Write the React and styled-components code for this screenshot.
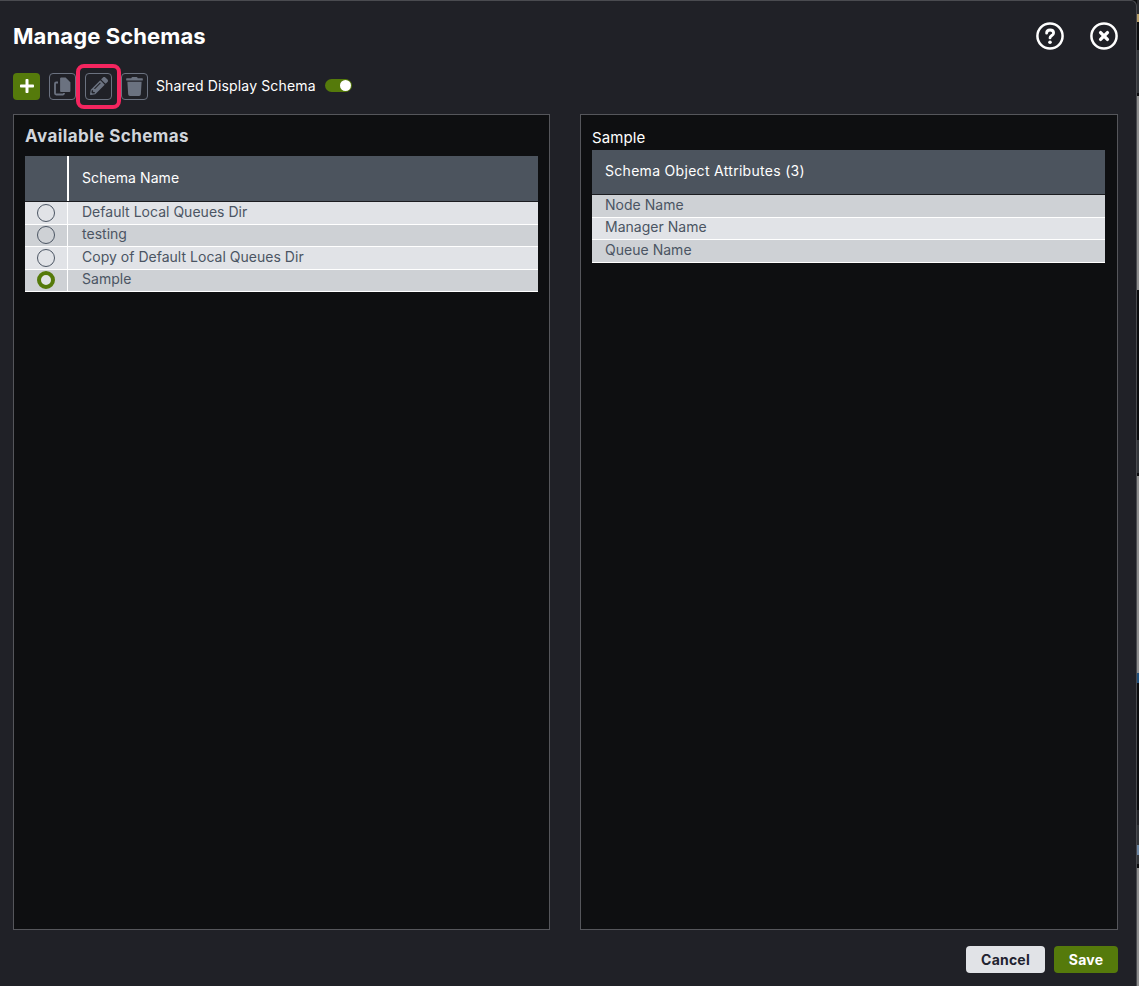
import React from 'react';
import styled, { createGlobalStyle } from 'styled-components';
import { FaPlus, FaPencilAlt, FaTrash } from 'react-icons/fa';

const GlobalStyle = createGlobalStyle`
  html, body {
    margin: 0;
    padding: 0;
    background: #0b0c0e;
    overflow: hidden;
  }
  body {
    font-family: "Inter", "Liberation Sans", sans-serif;
  }
`;

const Page = styled.div`
  display: flex;
  width: 1139px;
  height: 986px;
`;

const Dialog = styled.div`
  width: 1137px;
  height: 986px;
  flex: none;
  box-sizing: border-box;
  background: #202127;
  border-top: 1px solid #4a4b50;
  border-right: 1px solid #4a4b50;
  border-top-right-radius: 6px;
  padding: 0 18px 13px 13px;
  display: flex;
  flex-direction: column;
`;

/* sliver of the page behind the dialog */
const Backdrop = styled.div`
  flex: 1;
  background: linear-gradient(
    to bottom,
    #2a2b2f 0 14px,
    #b9a06a 14px 22px,
    #0b0c0e 22px 50px,
    #33363a 50px 93px,
    #0b0c0e 93px 96px,
    #8f8f8f 96px 290px,
    #0b0c0e 290px 440px,
    #33363a 440px 473px,
    #0b0c0e 473px 476px,
    #8f8f8f 476px 673px,
    #1f4e79 673px 683px,
    #0b0c0e 683px 810px,
    #222327 810px 825px,
    #33363a 825px 845px,
    #6d87a3 845px 855px,
    #33363a 855px 864px,
    #0b0c0e 864px 868px,
    #8f8f8f 868px 986px
  );
`;

const Header = styled.header`
  height: 70px;
  flex: none;
  display: flex;
  align-items: center;
  justify-content: space-between;
`;

const Title = styled.h1`
  margin: 0;
  color: #fff;
  font-size: 22px;
  font-weight: 700;
  letter-spacing: 0.1px;
`;

const HeaderIcons = styled.div`
  display: flex;
  gap: 26px;
  color: #fff;
`;

const Toolbar = styled.div`
  height: 28px;
  flex: none;
  display: flex;
  align-items: center;
  margin-top: 1px;
`;

const AddButton = styled.button`
  width: 27px;
  height: 27px;
  padding: 0;
  border: 0;
  border-radius: 4px;
  background: #557a0b;
  color: #fff;
  display: flex;
  align-items: center;
  justify-content: center;
  margin-right: 9px;
`;

const IconButton = styled.button`
  position: relative;
  width: 27px;
  height: 27px;
  padding: 0;
  border: 1px solid #6b7280;
  border-radius: 4px;
  background: transparent;
  color: #6b7280;
  display: flex;
  align-items: center;
  justify-content: center;
  margin-right: ${(p) => p.$gap}px;
`;

const Highlight = styled.span`
  position: absolute;
  inset: -10px;
  border: 4px solid #f5255f;
  border-radius: 8px;
`;

const ToggleLabel = styled.span`
  color: #fff;
  font-size: 14px;
  margin-left: 8px;
  margin-right: 9px;
  padding-bottom: 2px;
  letter-spacing: 0.14px;
`;

const Toggle = styled.span`
  width: 27px;
  height: 13px;
  margin-bottom: 1px;
  border-radius: 7px;
  background: #557a0b;
  display: flex;
  align-items: center;
  justify-content: flex-end;
  padding-right: 1px;
  box-sizing: border-box;
  &::after {
    content: '';
    width: 11px;
    height: 11px;
    border-radius: 50%;
    background: #fff;
  }
`;

const Panels = styled.div`
  flex: 1;
  display: grid;
  grid-template-columns: 537px 538px;
  gap: 30px;
  margin-top: 14px;
  min-height: 0;
`;

const Panel = styled.section`
  background: #0e0f11;
  border: 1px solid #55565b;
  padding: ${(p) => p.$top}px ${(p) => p.$right}px 0 11px;
`;

const PanelTitle = styled.h2`
  margin: 0 0 9px;
  color: #d1d5db;
  font-size: 17px;
  line-height: 22px;
  font-weight: 700;
  letter-spacing: 0.43px;
`;

const SampleTitle = styled.div`
  color: #fff;
  font-size: 15px;
  line-height: 20px;
  margin-bottom: 2px;
  letter-spacing: 0.1px;
`;

const TableHead = styled.div`
  display: flex;
  height: ${(p) => p.$height}px;
  background: #4c545e;
  border-bottom: 1px solid #1b1c20;
  color: #fff;
  font-size: 14px;
  letter-spacing: ${(p) => p.$track}px;
`;

const RadioHead = styled.div`
  width: 42px;
  flex: none;
  border-right: 2px solid #fff;
`;

const HeadLabel = styled.div`
  display: flex;
  align-items: center;
  padding-bottom: ${(p) => p.$lift}px;
  padding-left: ${(p) => p.$pad}px;
`;

const Row = styled.div`
  display: flex;
  height: 21.5px;
  border-bottom: 1px solid #fff;
  background: ${(p) => (p.$shade ? '#ced1d5' : '#e1e3e7')};
  color: #4b5563;
  font-size: 14px;
  letter-spacing: 0.02px;
`;

const RadioCell = styled.div`
  width: 42px;
  flex: none;
  border-right: 1px solid #fff;
  display: flex;
  align-items: center;
  justify-content: center;
`;

const Radio = styled.span`
  width: 18px;
  height: 18px;
  box-sizing: border-box;
  border-radius: 50%;
  border: ${(p) => (p.$on ? '4px solid #557a0b' : '1px solid #4b5563')};
  background: ${(p) => (p.$on ? '#e1e3e7' : 'transparent')};
`;

const CellText = styled.div`
  display: flex;
  align-items: center;
  padding-bottom: 2.6px;
  padding-left: ${(p) => p.$pad}px;
`;

const Footer = styled.footer`
  height: 43px;
  flex: none;
  display: flex;
  align-items: flex-end;
  justify-content: flex-end;
  gap: 9px;
`;

const FooterButton = styled.button`
  width: ${(p) => p.$width}px;
  height: 27px;
  border: 0;
  border-radius: 4px;
  font-family: inherit;
  font-size: 14px;
  font-weight: 700;
  letter-spacing: 0.2px;
  padding-bottom: 2px;
  background: ${(p) => (p.$primary ? '#557a0b' : '#e1e3e7')};
  color: ${(p) => (p.$primary ? '#fff' : '#1f2330')};
`;

const HelpIcon = () => (
  <svg width="28" height="28" viewBox="0 0 28 28" fill="none" stroke="currentColor" strokeWidth="2.5">
    <circle cx="14" cy="14" r="12.6" />
    <path d="M10.6 11.2c0-2.1 1.5-3.2 3.5-3.2s3.5 1.1 3.5 2.9c0 2.6-3.6 2.6-3.6 5" strokeWidth="2.8" strokeLinecap="round" />
    <circle cx="14" cy="20.2" r="1.8" fill="currentColor" stroke="none" />
  </svg>
);

const CloseIcon = () => (
  <svg width="28" height="28" viewBox="0 0 28 28" fill="none" stroke="currentColor" strokeWidth="2.5">
    <circle cx="14" cy="14" r="12.6" />
    <path d="M10.6 10.6l6.8 6.8M17.4 10.6l-6.8 6.8" strokeWidth="3.4" strokeLinecap="round" />
  </svg>
);

const CopyIcon = () => (
  <svg width="25" height="25" viewBox="0 0 25 25" fill="currentColor">
    <path d="M8 8.5H6.2A1.2 1.2 0 0 0 5 9.700v9.600a1.200 1.200 0 0 0 1.200 1.200h6.600a1.200 1.200 0 0 0 1.200-1.200V18" fill="none" stroke="currentColor" strokeWidth="1.8" />
    <path d="M9.500 4.500A1.500 1.500 0 0 1 11 3h5L21 8v9a1.500 1.500 0 0 1-1.500 1.500H11A1.500 1.500 0 0 1 9.500 17z" stroke="#202127" strokeWidth="1.2" />
  </svg>
);

const schemas = [
  { name: 'Default Local Queues Dir' },
  { name: 'testing' },
  { name: 'Copy of Default Local Queues Dir' },
  { name: 'Sample', selected: true },
];

const attributes = ['Node Name', 'Manager Name', 'Queue Name'];

export default function App() {
  return (
    <Page>
      <GlobalStyle />
      <Dialog>
        <Header>
          <Title>Manage Schemas</Title>
          <HeaderIcons>
            <HelpIcon />
            <CloseIcon />
          </HeaderIcons>
        </Header>
        <Toolbar>
          <AddButton aria-label="Add"><FaPlus size={16} /></AddButton>
          <IconButton aria-label="Copy" $gap={9}><CopyIcon /></IconButton>
          <IconButton aria-label="Edit" $gap={9}>
            <FaPencilAlt size={18} />
            <Highlight />
          </IconButton>
          <IconButton aria-label="Delete" $gap={0}><FaTrash size={19} /></IconButton>
          <ToggleLabel>Shared Display Schema</ToggleLabel>
          <Toggle />
        </Toolbar>
        <Panels>
          <Panel $top={10} $right={11}>
            <PanelTitle>Available Schemas</PanelTitle>
            <TableHead $height={45} $track={0.08}>
              <RadioHead />
              <HeadLabel $pad={13} $lift={2}>Schema Name</HeadLabel>
            </TableHead>
            {schemas.map((s, i) => (
              <Row key={s.name} $shade={i % 2 === 1}>
                <RadioCell><Radio $on={s.selected} /></RadioCell>
                <CellText $pad={14}>{s.name}</CellText>
              </Row>
            ))}
          </Panel>
          <Panel $top={13} $right={12}>
            <SampleTitle>Sample</SampleTitle>
            <TableHead $height={44} $track={0.3}>
              <HeadLabel $pad={13} $lift={3}>Schema Object Attributes (3)</HeadLabel>
            </TableHead>
            {attributes.map((name, i) => (
              <Row key={name} $shade={i % 2 === 0}>
                <CellText $pad={13}>{name}</CellText>
              </Row>
            ))}
          </Panel>
        </Panels>
        <Footer>
          <FooterButton $width={79}>Cancel</FooterButton>
          <FooterButton $primary $width={64}>Save</FooterButton>
        </Footer>
      </Dialog>
      <Backdrop />
    </Page>
  );
}
